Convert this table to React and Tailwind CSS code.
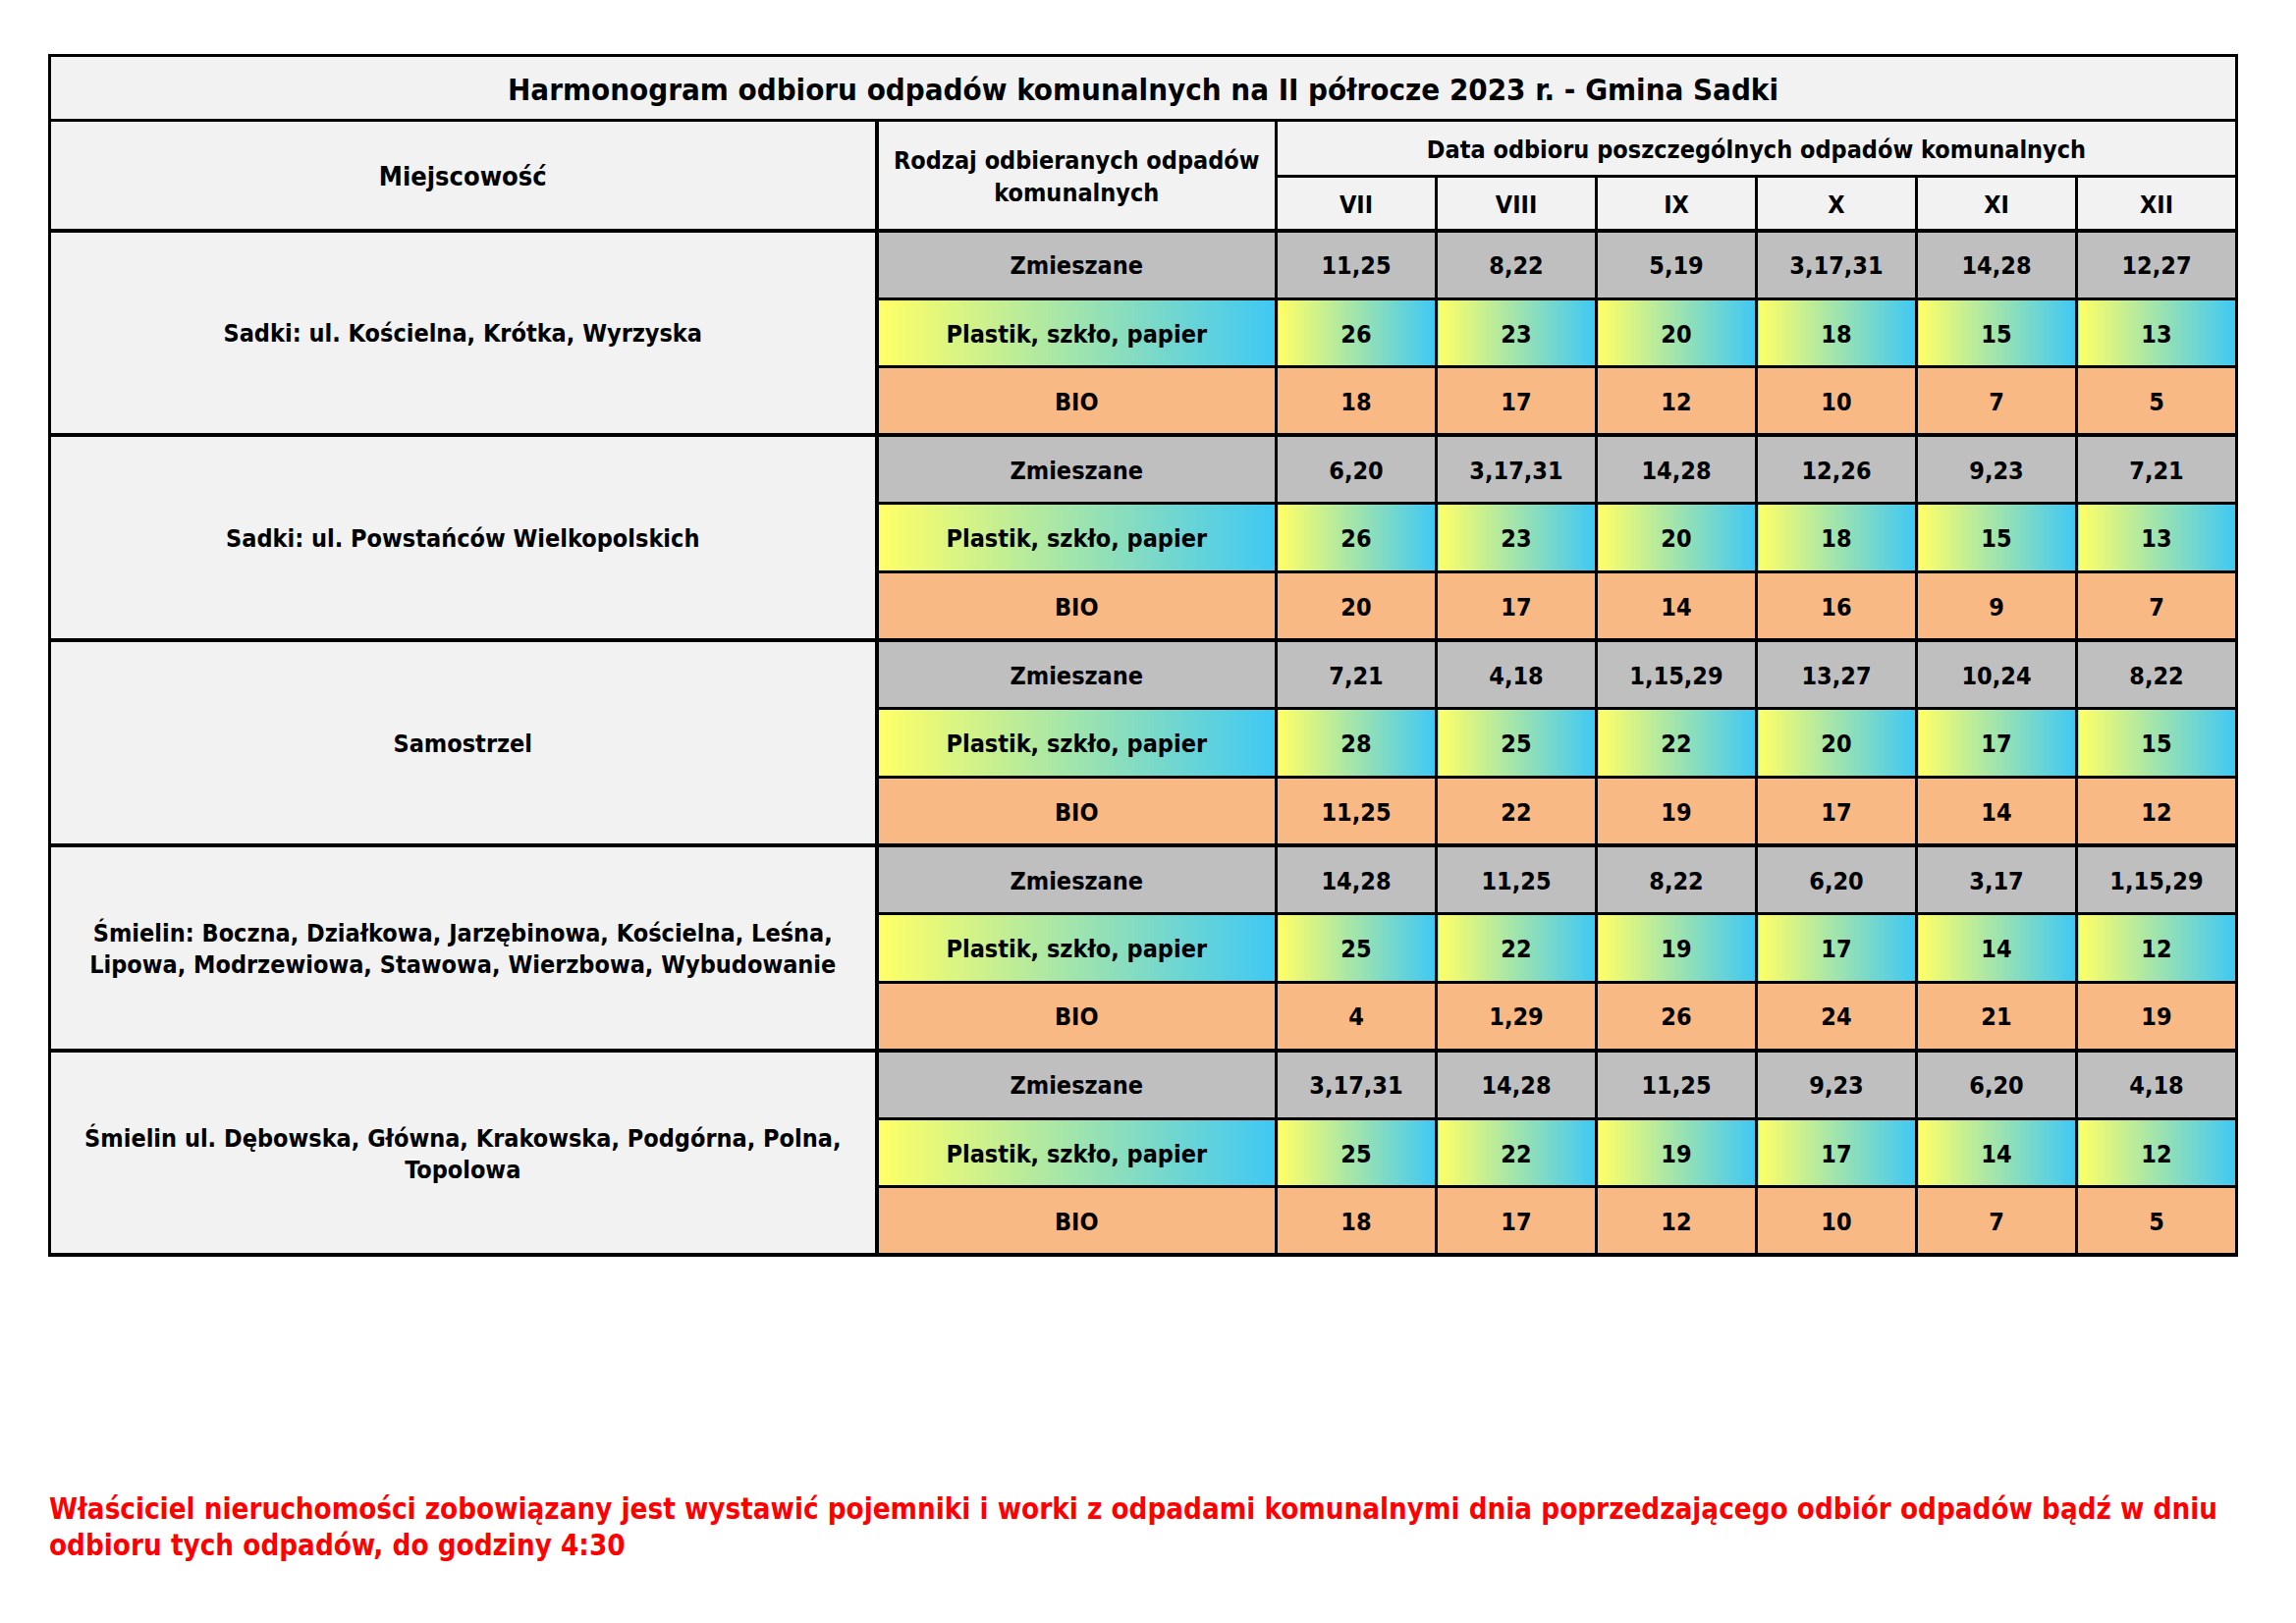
const FONT = { fontFamily: '"DejaVu Sans Condensed", "DejaVu Sans", Verdana, sans-serif', fontStretch: 'condensed' };

const MONTHS = ['VII', 'VIII', 'IX', 'X', 'XI', 'XII'];

const GROUPS = [
  {
    place: ['Sadki: ul. Kościelna, Krótka, Wyrzyska'],
    mixed: ['11,25', '8,22', '5,19', '3,17,31', '14,28', '12,27'],
    plastic: ['26', '23', '20', '18', '15', '13'],
    bio: ['18', '17', '12', '10', '7', '5'],
  },
  {
    place: ['Sadki: ul. Powstańców Wielkopolskich'],
    mixed: ['6,20', '3,17,31', '14,28', '12,26', '9,23', '7,21'],
    plastic: ['26', '23', '20', '18', '15', '13'],
    bio: ['20', '17', '14', '16', '9', '7'],
  },
  {
    place: ['Samostrzel'],
    mixed: ['7,21', '4,18', '1,15,29', '13,27', '10,24', '8,22'],
    plastic: ['28', '25', '22', '20', '17', '15'],
    bio: ['11,25', '22', '19', '17', '14', '12'],
  },
  {
    place: ['Śmielin: Boczna, Działkowa, Jarzębinowa, Kościelna, Leśna,', 'Lipowa, Modrzewiowa, Stawowa, Wierzbowa, Wybudowanie'],
    mixed: ['14,28', '11,25', '8,22', '6,20', '3,17', '1,15,29'],
    plastic: ['25', '22', '19', '17', '14', '12'],
    bio: ['4', '1,29', '26', '24', '21', '19'],
  },
  {
    place: ['Śmielin ul. Dębowska, Główna, Krakowska, Podgórna, Polna,', 'Topolowa'],
    mixed: ['3,17,31', '14,28', '11,25', '9,23', '6,20', '4,18'],
    plastic: ['25', '22', '19', '17', '14', '12'],
    bio: ['18', '17', '12', '10', '7', '5'],
  },
];

// every cell: black grid line, centred text
const cell = 'border-[3px] border-black text-center align-middle px-0 pt-[3px] pb-0';
const grad = 'bg-linear-to-r/srgb from-[#ffff66] to-[#3fc8f4]';

function Group({ g }) {
  return (
    <>
      <tr className="h-[69.6px]">
        <td rowSpan={3} className={`${cell} border-r-4 border-b-4 bg-[#f2f2f2] leading-[32px]`}>
          {g.place.map((l, i) => <div key={i}>{l}</div>)}
        </td>
        <td className={`${cell} bg-[#bfbfbf]`}>Zmieszane</td>
        {g.mixed.map((v, i) => <td key={i} className={`${cell} bg-[#bfbfbf]`}>{v}</td>)}
      </tr>
      <tr className="h-[69.6px]">
        <td className={`${cell} ${grad}`}>Plastik, szkło, papier</td>
        {g.plastic.map((v, i) => <td key={i} className={`${cell} ${grad}`}>{v}</td>)}
      </tr>
      <tr className="h-[69.6px]">
        <td className={`${cell} border-b-4 bg-[#f9b985]`}>BIO</td>
        {g.bio.map((v, i) => <td key={i} className={`${cell} border-b-4 bg-[#f9b985]`}>{v}</td>)}
      </tr>
    </>
  );
}

export default function App() {
  return (
    <div className="w-[2338px] h-[1653px] bg-white text-black font-bold" style={FONT}>
      <div className="pt-[55px] pl-[49px]">
        <table className="table-fixed border-collapse w-[2230px] text-[25px]">
          <colgroup>
            <col className="w-[842px]" />
            <col className="w-[407px]" />
            {MONTHS.map(m => <col key={m} />)}
          </colgroup>
          <thead>
            <tr className="h-[66px]">
              <th colSpan={8} className={`${cell} border-4 bg-[#f2f2f2] text-[31px]`}>
                Harmonogram odbioru odpadów komunalnych na II półrocze 2023 r. - Gmina Sadki
              </th>
            </tr>
            <tr className="h-[57px]">
              <th rowSpan={2} className={`${cell} border-r-4 border-b-4 bg-[#f2f2f2] text-[27px]`}>Miejscowość</th>
              <th rowSpan={2} className={`${cell} border-b-4 bg-[#f2f2f2] leading-[33px]`}>
                <div>Rodzaj odbieranych odpadów</div>
                <div>komunalnych</div>
              </th>
              <th colSpan={6} className={`${cell} bg-[#f2f2f2]`}>Data odbioru poszczególnych odpadów komunalnych</th>
            </tr>
            <tr className="h-[55px]">
              {MONTHS.map(m => (
                <th key={m} className={`${cell} border-b-4 bg-[#f2f2f2]`}>{m}</th>
              ))}
            </tr>
          </thead>
          <tbody>
            {GROUPS.map((g, i) => <Group key={i} g={g} />)}
          </tbody>
        </table>
      </div>
      <div className="pl-[50px] pt-[239px] text-[29.3px] leading-[37px] text-[#ff0000]">
        <div>Właściciel nieruchomości zobowiązany jest wystawić pojemniki i worki z odpadami komunalnymi dnia poprzedzającego odbiór odpadów bądź w dniu</div>
        <div>odbioru tych odpadów, do godziny 4:30</div>
      </div>
    </div>
  );
}
